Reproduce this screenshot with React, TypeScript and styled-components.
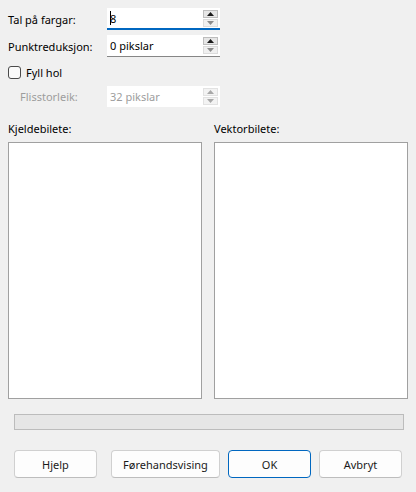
import styled, { createGlobalStyle } from 'styled-components';

const GlobalStyle = createGlobalStyle`
  html, body {
    margin: 0;
    padding: 0;
    background: #f0f0f0;
  }
  * {
    box-sizing: border-box;
  }
`;

const FONT = `'Noto Sans', 'Liberation Sans', sans-serif`;

const Dialog = styled.div`
  width: 416px;
  height: 492px;
  padding: 8px 8px 0 8px;
  display: flex;
  flex-direction: column;
  background: #f0f0f0;
  font-family: ${FONT};
  font-size: 11px;
  color: #000;
`;

const FieldRow = styled.div<{ $top: number; $indent?: number; $height: number }>`
  display: grid;
  grid-template-columns: ${p => 99 - (p.$indent || 0)}px 113px;
  align-items: center;
  height: ${p => p.$height}px;
  margin-top: ${p => p.$top}px;
  padding-left: ${p => p.$indent || 0}px;
`;

const Label = styled.span<{ $disabled?: boolean }>`
  color: ${p => (p.$disabled ? '#9d9d9d' : '#000')};
  white-space: nowrap;
`;

const SpinBox = styled.div<{ $focused?: boolean; $disabled?: boolean }>`
  display: flex;
  align-items: center;
  height: 100%;
  padding-left: 3px;
  padding-right: 2px;
  background: #fff;
  border-bottom: ${p =>
    p.$disabled ? 'none' : p.$focused ? '2px solid #0067c0' : '1px solid #868686'};
  color: ${p => (p.$disabled ? '#9d9d9d' : '#000')};
`;

const SpinText = styled.span`
  flex: 1;
  display: flex;
  align-items: center;
  white-space: nowrap;
`;

const Caret = styled.span`
  display: inline-block;
  width: 1px;
  height: 14px;
  margin-right: -1px;
  background: #000;
`;

const SpinButtons = styled.div`
  display: flex;
  flex-direction: column;
  gap: 1px;
  width: 15px;
  align-self: flex-start;
  margin-top: 2px;
`;

const SpinButton = styled.div<{ $strong?: boolean; $disabled?: boolean }>`
  height: 8px;
  display: flex;
  align-items: center;
  justify-content: center;
  border: 1px solid ${p => (p.$disabled ? '#e2e2e2' : p.$strong ? '#bdbdbd' : '#dcdcdc')};
  background: ${p => (p.$disabled ? '#f3f3f3' : p.$strong ? '#e6e6e6' : '#f0f0f0')};
`;

const Arrow = ({ up, color }: { up?: boolean; color: string }) => (
  <svg width="7" height="4" viewBox="0 0 7 4">
    <path d={up ? 'M0 4 L3.5 0 L7 4 Z' : 'M0 0 L3.5 4 L7 0 Z'} fill={color} />
  </svg>
);

const CheckRow = styled.label`
  display: flex;
  align-items: center;
  gap: 5px;
  height: 16px;
  margin-top: 7px;
`;

const CheckBox = styled.span`
  width: 13px;
  height: 13px;
  border: 1px solid #4a4a4a;
  border-radius: 3px;
  background: #fafafa;
`;

const Panels = styled.div`
  display: grid;
  grid-template-columns: 194px 194px;
  column-gap: 12px;
  margin-top: 14px;
`;

const PanelColumn = styled.div`
  display: flex;
  flex-direction: column;
  gap: 5px;
`;

const PanelTitle = styled.span`
  height: 16px;
  line-height: 16px;
`;

const Canvas = styled.div`
  height: 257px;
  background: #fff;
  border: 1px solid #a0a0a0;
`;

const Progress = styled.div`
  height: 16px;
  margin: 15px 4px 0 6px;
  background: #e6e6e6;
  border: 1px solid #bcbcbc;
`;

const ButtonBar = styled.div`
  display: flex;
  margin: 20px 0 0 6px;
`;

const Button = styled.button<{ $width: number; $gap: number; $default?: boolean }>`
  width: ${p => p.$width}px;
  height: 28px;
  margin-left: ${p => p.$gap}px;
  padding: 0;
  font-family: ${FONT};
  font-size: 11px;
  color: #1a1a1a;
  background: #fdfdfd;
  border: 1px solid ${p => (p.$default ? '#0067c0' : '#d0d0d0')};
  border-bottom-color: ${p => (p.$default ? '#0067c0' : '#bdbdbd')};
  border-radius: 4px;
`;

const Spin = ({ value, focused, disabled }: { value: string; focused?: boolean; disabled?: boolean }) => (
  <SpinBox $focused={focused} $disabled={disabled}>
    <SpinText>
      {focused && <Caret />}
      {value}
    </SpinText>
    <SpinButtons>
      <SpinButton $strong={!disabled} $disabled={disabled}>
        <Arrow up color={disabled ? '#a8a8a8' : '#1a1a1a'} />
      </SpinButton>
      <SpinButton $disabled={disabled}>
        <Arrow color={disabled ? '#a8a8a8' : '#8c8c8c'} />
      </SpinButton>
    </SpinButtons>
  </SpinBox>
);

export default function App() {
  return (
    <>
      <GlobalStyle />
      <Dialog>
        <FieldRow $top={0} $height={22}>
          <Label>Tal på fargar:</Label>
          <Spin value="8" focused />
        </FieldRow>
        <FieldRow $top={5} $height={22}>
          <Label>Punktreduksjon:</Label>
          <Spin value="0 pikslar" />
        </FieldRow>
        <CheckRow>
          <CheckBox />
          <span>Fyll hol</span>
        </CheckRow>
        <FieldRow $top={6} $height={21} $indent={12}>
          <Label $disabled>Flisstorleik:</Label>
          <Spin value="32 pikslar" disabled />
        </FieldRow>
        <Panels>
          <PanelColumn>
            <PanelTitle>Kjeldebilete:</PanelTitle>
            <Canvas />
          </PanelColumn>
          <PanelColumn>
            <PanelTitle>Vektorbilete:</PanelTitle>
            <Canvas />
          </PanelColumn>
        </Panels>
        <Progress />
        <ButtonBar>
          <Button $width={83} $gap={0}>Hjelp</Button>
          <Button $width={109} $gap={14}>Førehandsvising</Button>
          <Button $width={83} $gap={8} $default>OK</Button>
          <Button $width={83} $gap={8}>Avbryt</Button>
        </ButtonBar>
      </Dialog>
    </>
  );
}
